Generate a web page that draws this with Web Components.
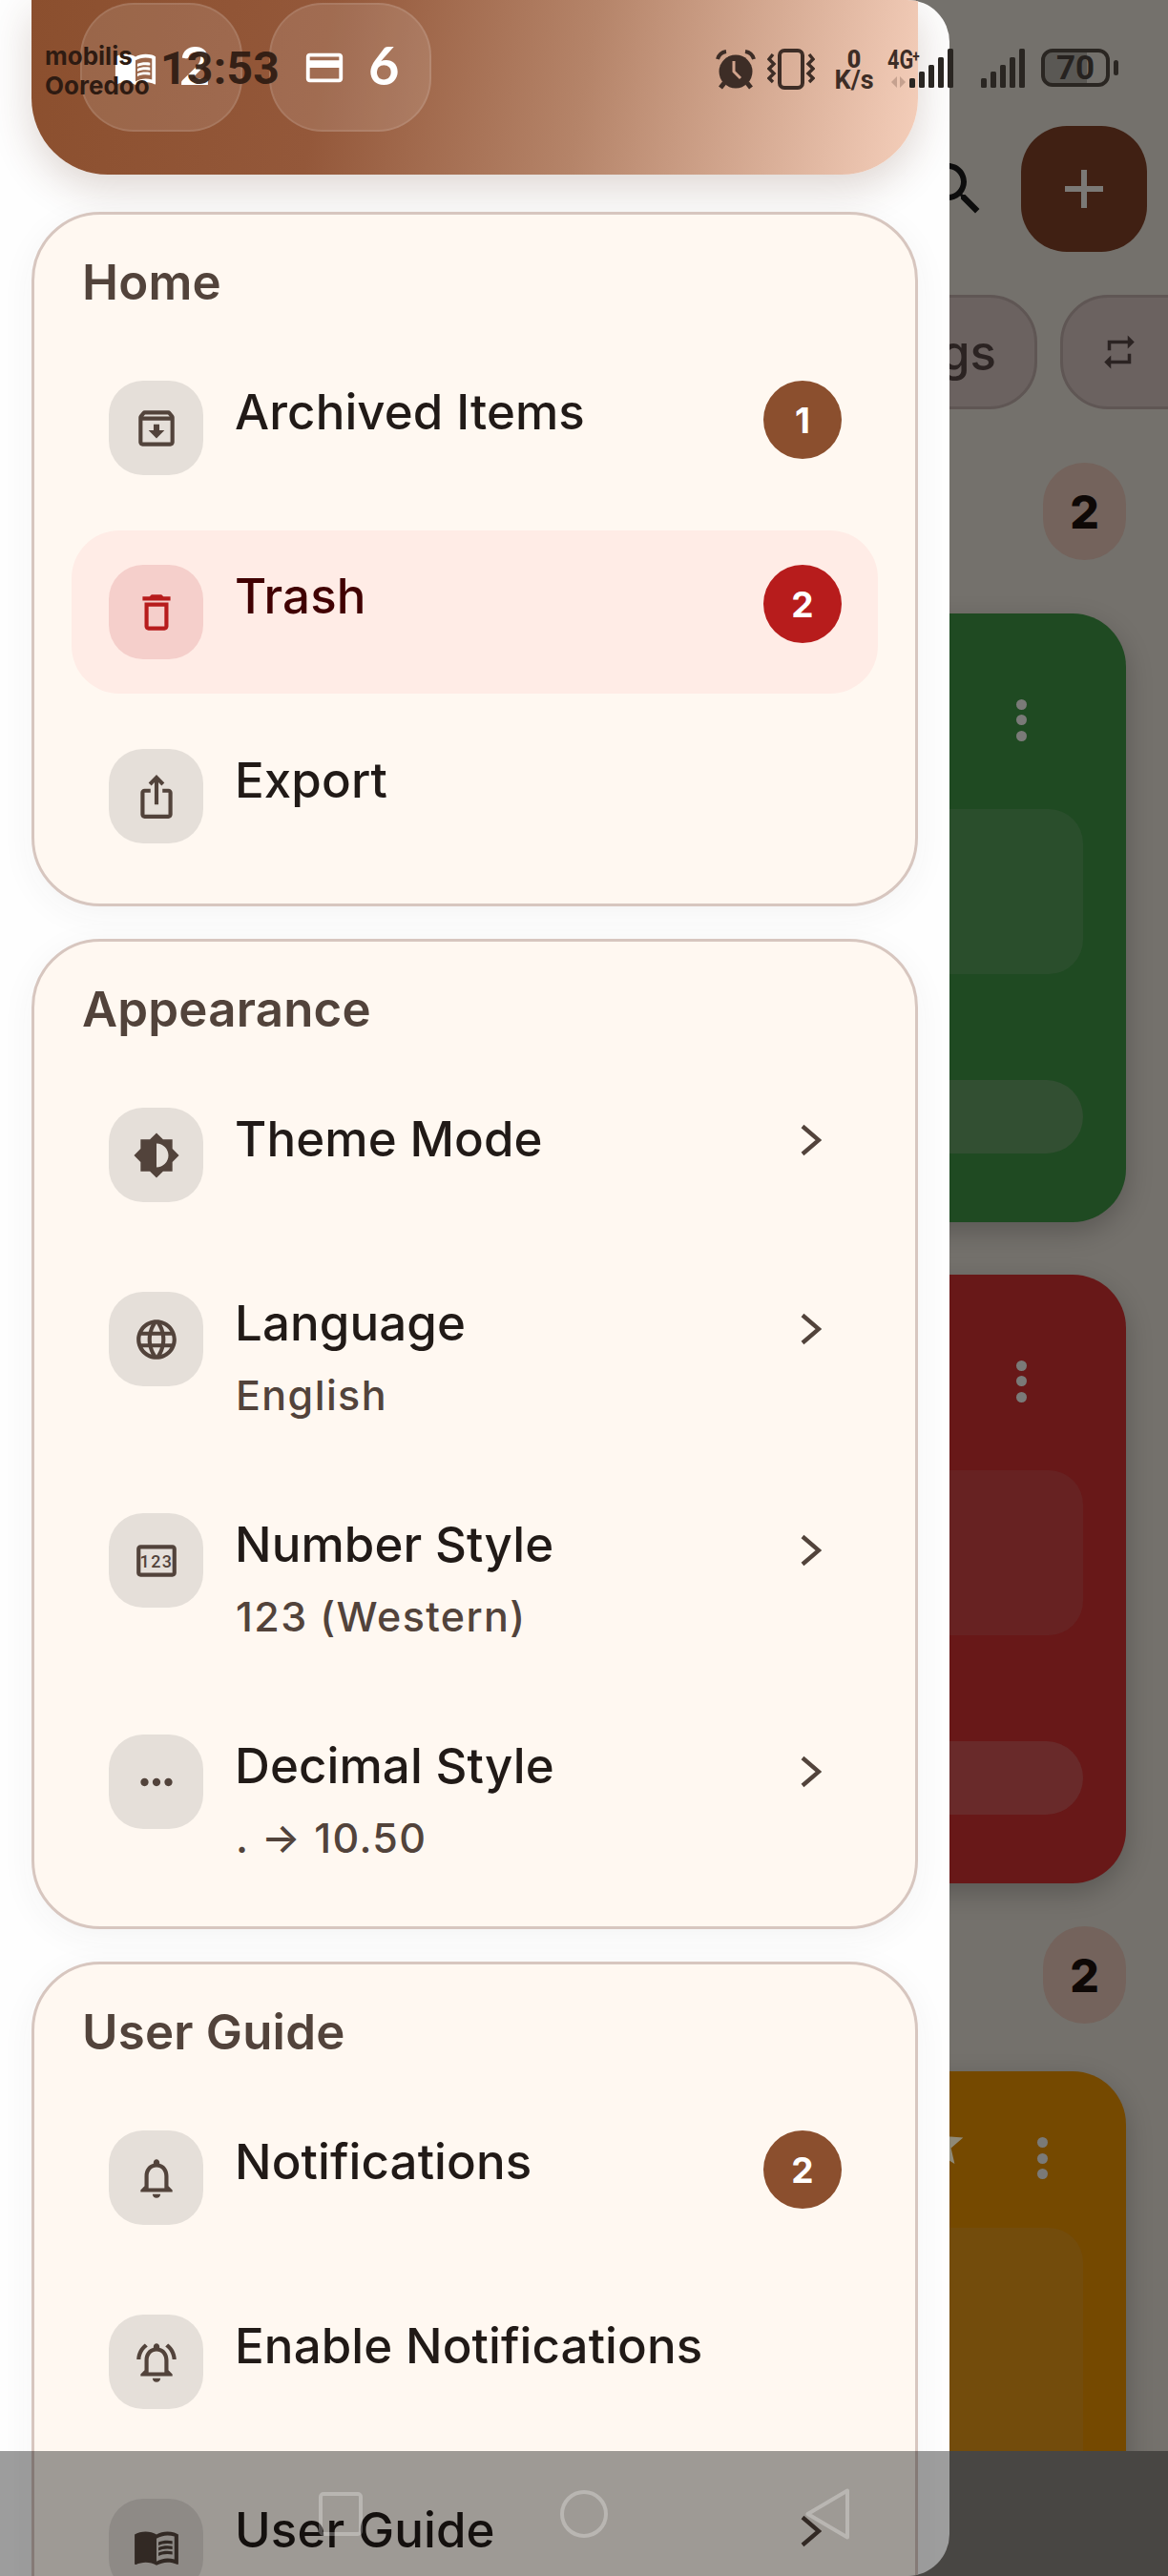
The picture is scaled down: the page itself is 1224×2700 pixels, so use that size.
<!DOCTYPE html>
<html lang="en"><head><meta charset="utf-8"><title>Drawer</title>
<style>
html,body{margin:0;padding:0;background:#74716c}
body{font-family:"Inter","Noto Sans",sans-serif;width:1224px;height:2700px;overflow:hidden}
</style></head><body>
<phone-screen>
  <bg-screen slot="bg"></bg-screen>
  <nav-drawer slot="drawer">
    <drawer-header>
      <stat-chip><app-icon slot="icon" name="book" size="46"></app-icon>2</stat-chip>
      <stat-chip><app-icon slot="icon" name="card" size="46"></app-icon>6</stat-chip>
    </drawer-header>
    <menu-card heading="Home">
      <menu-item><app-icon slot="icon" name="archive"></app-icon>Archived Items<count-badge slot="end">1</count-badge></menu-item>
      <menu-item tone="danger"><app-icon slot="icon" name="trash"></app-icon>Trash<count-badge slot="end" tone="danger">2</count-badge></menu-item>
      <menu-item><app-icon slot="icon" name="share"></app-icon>Export</menu-item>
    </menu-card>
    <menu-card heading="Appearance">
      <menu-item><app-icon slot="icon" name="theme"></app-icon>Theme Mode<chev-mark slot="end"></chev-mark></menu-item>
      <menu-item><app-icon slot="icon" name="globe"></app-icon>Language<span slot="sub">English</span><chev-mark slot="end" low></chev-mark></menu-item>
      <menu-item><app-icon slot="icon" name="pin"></app-icon>Number Style<span slot="sub">123 (Western)</span><chev-mark slot="end" low></chev-mark></menu-item>
      <menu-item><app-icon slot="icon" name="more"></app-icon>Decimal Style<span slot="sub">. → 10.50</span><chev-mark slot="end" low></chev-mark></menu-item>
    </menu-card>
    <menu-card heading="User Guide">
      <menu-item><app-icon slot="icon" name="bell"></app-icon>Notifications<count-badge slot="end">2</count-badge></menu-item>
      <menu-item><app-icon slot="icon" name="bellon"></app-icon>Enable Notifications</menu-item>
      <menu-item><app-icon slot="icon" name="book"></app-icon>User Guide<chev-mark slot="end"></chev-mark></menu-item>
    </menu-card>
  </nav-drawer>
  <status-bar slot="over"></status-bar>
  <sys-nav slot="over"></sys-nav>
</phone-screen>
<script>
const ICONS={
archive:'<path d="M20.54 5.23l-1.39-1.68C18.88 3.21 18.47 3 18 3H6c-.47 0-.88.21-1.16.55L3.46 5.23C3.17 5.57 3 6.02 3 6.5V19c0 1.1.9 2 2 2h14c1.1 0 2-.9 2-2V6.5c0-.48-.17-.93-.46-1.27zM6.24 5h11.52l.83 1H5.42l.82-1zM5 19V8h14v11H5zm8.45-9h-2.9v3H8l4 4 4-4h-2.55z"/>',
trash:'<path d="M6 19c0 1.1.9 2 2 2h8c1.1 0 2-.9 2-2V7H6v12zM8 9h8v10H8V9zm7.5-5l-1-1h-5l-1 1H5v2h14V4z"/>',
share:'<path d="M16 5l-1.42 1.42-1.59-1.59V16h-1.98V4.83L9.42 6.42 8 5l4-4 4 4zm4 5v11c0 1.1-.9 2-2 2H6c-1.11 0-2-.9-2-2V10c0-1.11.89-2 2-2h3v2H6v11h12V10h-3V8h3c1.1 0 2 .89 2 2z"/>',
theme:'<path fill-rule="evenodd" d="M20 15.31L23.31 12 20 8.69V4h-4.69L12 .69 8.69 4H4v4.69L.69 12 4 15.31V20h4.69L12 23.31 15.31 20H20v-4.69zM12 18V6c3.31 0 6 2.69 6 6s-2.69 6-6 6z"/>',
globe:'<path d="M11.99 2C6.47 2 2 6.48 2 12s4.47 10 9.99 10C17.52 22 22 17.52 22 12S17.52 2 11.99 2zm6.93 6h-2.95c-.32-1.25-.78-2.45-1.38-3.56 1.84.63 3.37 1.91 4.33 3.56zM12 4.04c.83 1.2 1.48 2.53 1.91 3.96h-3.82c.43-1.43 1.08-2.76 1.91-3.96zM4.26 14C4.1 13.36 4 12.69 4 12s.1-1.36.26-2h3.38c-.08.66-.14 1.32-.14 2 0 .68.06 1.34.14 2H4.26zm.82 2h2.95c.32 1.25.78 2.45 1.38 3.56-1.84-.63-3.37-1.9-4.33-3.56zm2.95-8H5.08c.96-1.66 2.49-2.93 4.33-3.56C8.81 5.55 8.35 6.75 8.03 8zM12 19.96c-.83-1.2-1.48-2.53-1.91-3.96h3.82c-.43 1.43-1.08 2.76-1.91 3.96zM14.34 14H9.66c-.09-.66-.16-1.32-.16-2 0-.68.07-1.35.16-2h4.68c.09.65.16 1.32.16 2 0 .68-.07 1.34-.16 2zm.25 5.56c.6-1.11 1.06-2.31 1.38-3.56h2.95c-.96 1.65-2.49 2.93-4.33 3.56zM16.36 14c.08-.66.14-1.32.14-2 0-.68-.06-1.34-.14-2h3.38c.16.64.26 1.31.26 2s-.1 1.36-.26 2h-3.38z"/>',
pin:'<path d="M20 4H4c-1.11 0-2 .89-2 2v12c0 1.11.89 2 2 2h16c1.11 0 2-.89 2-2V6c0-1.11-.89-2-2-2zm0 14H4V6h16v12z"/><text x="12" y="15.3" text-anchor="middle" font-family="Roboto,sans-serif" font-weight="500" font-size="8.6" letter-spacing=".7">123</text>',
more:'<path d="M6 10c-1.1 0-2 .9-2 2s.9 2 2 2 2-.9 2-2-.9-2-2-2zm12 0c-1.1 0-2 .9-2 2s.9 2 2 2 2-.9 2-2-.9-2-2-2zm-6 0c-1.1 0-2 .9-2 2s.9 2 2 2 2-.9 2-2-.9-2-2-2z"/>',
bell:'<path d="M12 22c1.1 0 2-.9 2-2h-4c0 1.1.9 2 2 2zm6-6v-5c0-3.07-1.63-5.64-4.5-6.32V4c0-.83-.67-1.5-1.5-1.5s-1.5.67-1.5 1.5v.68C7.64 5.36 6 7.92 6 11v5l-2 2v1h16v-1l-2-2zm-2 1H8v-6c0-2.48 1.51-4.5 4-4.5s4 2.02 4 4.5v6z"/>',
bellon:'<path d="M12 22c1.1 0 2-.9 2-2h-4c0 1.1.9 2 2 2zm6-6v-5c0-3.07-1.63-5.64-4.5-6.32V4c0-.83-.67-1.5-1.5-1.5s-1.5.67-1.5 1.5v.68C7.64 5.36 6 7.92 6 11v5l-2 2v1h16v-1l-2-2zm-2 1H8v-6c0-2.48 1.51-4.5 4-4.5s4 2.02 4 4.5v6z"/><path d="M7.58 4.08L6.15 2.65C3.75 4.48 2.17 7.3 2.03 10.5h2c.15-2.65 1.51-4.97 3.55-6.42zm12.39 6.42h2c-.15-3.2-1.73-6.02-4.12-7.85l-1.42 1.43c2.02 1.45 3.39 3.77 3.54 6.42z"/>',
book:'<path d="M21 5c-1.11-.35-2.33-.5-3.5-.5-1.95 0-4.05.4-5.5 1.5-1.45-1.1-3.55-1.5-5.5-1.5S2.45 4.9 1 6v14.65c0 .25.25.5.5.5.1 0 .15-.05.25-.05C3.1 20.45 5.05 20 6.5 20c1.95 0 4.05.4 5.5 1.5 1.35-.85 3.8-1.5 5.5-1.5 1.65 0 3.35.3 4.75 1.05.1.05.15.05.25.05.25 0 .5-.25.5-.5V6c-.6-.45-1.25-.75-2-1zm0 13.5c-1.1-.35-2.3-.5-3.5-.5-1.7 0-4.15.65-5.5 1.5V8c1.35-.85 3.8-1.5 5.5-1.5 1.2 0 2.4.15 3.5.5v11.5z"/><path d="M17.5 10.5c.88 0 1.73.09 2.5.26V9.24c-.79-.15-1.64-.24-2.5-.24-1.7 0-3.24.29-4.5.83v1.66c1.13-.64 2.7-.99 4.5-.99zM13 12.49v1.66c1.13-.64 2.7-.99 4.5-.99.88 0 1.73.09 2.5.26V11.9c-.79-.15-1.64-.24-2.5-.24-1.7 0-3.24.3-4.5.83zm4.5 1.84c-1.7 0-3.24.29-4.5.83v1.66c1.13-.64 2.7-.99 4.5-.99.88 0 1.73.09 2.5.26v-1.52c-.79-.16-1.64-.24-2.5-.24z"/>',
card:'<path d="M20 4H4c-1.11 0-1.99.89-1.99 2L2 18c0 1.11.89 2 2 2h16c1.11 0 2-.89 2-2V6c0-1.11-.89-2-2-2zm0 14H4v-6h16v6zm0-10H4V6h16v2z"/>',
repeat:'<path d="M7 7h10v3l4-4-4-4v3H5v6h2V7zm10 10H7v-3l-4 4 4 4v-3h12v-6h-2v4z"/>',
search:'<path d="M15.5 14h-.79l-.28-.27C15.41 12.59 16 11.11 16 9.5 16 5.91 13.09 3 9.5 3S3 5.91 3 9.5 5.91 16 9.5 16c1.61 0 3.09-.59 4.23-1.57l.27.28v.79l5 4.99L20.49 19l-4.99-5zm-6 0C7.01 14 5 11.99 5 9.5S7.01 5 9.5 5 14 7.01 14 9.5 11.99 14 9.5 14z"/>',
star:'<path d="M12 17.27L18.18 21l-1.64-7.03L22 9.24l-7.19-.61L12 2 9.19 8.63 2 9.24l5.46 4.73L5.82 21z"/>'
};
function def(name,css,html){
  class C extends HTMLElement{
    constructor(){super();this.attachShadow({mode:'open'});}
    connectedCallback(){
      if(this.shadowRoot.firstChild)return;
      this.shadowRoot.innerHTML='<style>'+css+'</style>'+(typeof html==='function'?html(this):html);
    }
  }
  customElements.define(name,C);
}
class AppIcon extends HTMLElement{
  connectedCallback(){
    if(this.shadowRoot)return;
    const s=this.getAttribute('size')||50;
    this.attachShadow({mode:'open'}).innerHTML=`<style>:host{display:block;width:${s}px;height:${s}px;color:inherit}svg{display:block;width:100%;height:100%;fill:currentColor}</style><svg viewBox="0 0 24 24">${ICONS[this.getAttribute('name')]}</svg>`;
  }
}
customElements.define('app-icon',AppIcon);

def('phone-screen',`
:host{display:block;position:relative;width:1224px;height:2700px;overflow:hidden;background:#74716c}
.stack{display:grid;width:1224px;height:2700px;grid-template:2700px/1224px}
::slotted([slot=bg]),::slotted([slot=drawer]){grid-area:1/1}
`,`<div class="stack"><slot name="bg"></slot><slot name="drawer"></slot></div><slot name="over"></slot>`);

def('bg-card',`
:host{display:block;box-sizing:border-box;width:280px;margin:var(--mt,0) 44px 0 0;height:var(--h,638px);background:var(--c);border-radius:56px;box-shadow:0 10px 28px rgba(0,0,0,.22);overflow:hidden;flex:none}
.head{box-sizing:border-box;height:var(--head,205px);padding:18px var(--dr,104px) 0 0;display:flex;justify-content:flex-end;align-items:center;gap:73px;color:#8f8a78}
.head ::slotted(*){margin-top:-30px}
.dots{display:flex;flex-direction:column;gap:5.5px}
.dots i{display:block;width:11px;height:11px;border-radius:50%;background:#7a7a78}
.panel{height:var(--ph,173px);margin-right:45px;background:var(--p);border-radius:0 36px 36px 0}
.pill{height:77px;margin:111px 45px 0 0;background:var(--q);border-radius:0 40px 40px 0}
`,h=>`<div class="head"><slot></slot><div class="dots"><i></i><i></i><i></i></div></div><div class="panel"></div>${h.hasAttribute('nopill')?'':'<div class="pill"></div>'}`);

def('bg-count',`
:host{display:flex;align-items:center;justify-content:center;width:87px;height:102px;margin:var(--mt,0) 44px 0 0;border-radius:44px;background:#74635c;color:#0e0806;font:800 48px "Inter",sans-serif;flex:none}
`,`<slot></slot>`);

def('bg-screen',`
:host{display:flex;flex-direction:column;align-items:flex-end;height:2569px;overflow:hidden;padding-top:132px;box-sizing:border-box}
.top{display:flex;align-items:center;gap:33px;margin-right:22px;flex:none}
.top app-icon{color:#0d0d0d}
.add{width:132px;height:132px;border-radius:48px;background:#402013;display:flex;align-items:center;justify-content:center}
.add svg{width:40px;height:40px;display:block}
.chips{display:flex;gap:24px;margin:45px -76px 0 0;flex:none;height:120px}
.chip{box-sizing:border-box;height:120px;border:3px solid #5f5654;background:#6b6260;border-radius:50px;display:flex;align-items:center;color:#2b2322;font:500 51px "Inter",sans-serif}
.c1{width:187px;justify-content:flex-end;padding-right:40px}
.c2{width:189px;padding-left:38px}
`,`<div class="top"><app-icon name="search" size="72"></app-icon><div class="add"><svg viewBox="0 0 40 40"><path d="M17 0h6v17h17v6H23v17h-6V23H0v-6h17z" fill="#7b7976"/></svg></div></div>
<div class="chips"><div class="chip c1">gs</div><div class="chip c2"><app-icon name="repeat" size="42"></app-icon></div></div>
<bg-count style="--mt:56px">2</bg-count>
<bg-card style="--mt:56px;--c:#1f4a22;--p:#2a4e2c;--q:#324f32"></bg-card>
<bg-card style="--mt:55px;--c:#681818;--p:#672222;--q:#692a2a"></bg-card>
<bg-count style="--mt:45px">2</bg-count>
<bg-card nopill style="--mt:50px;--h:700px;--c:#754900;--p:#734c0c;--head:164px;--ph:420px;--dr:82px"><app-icon name="star" size="56"></app-icon></bg-card>`);

def('nav-drawer',`
:host{display:block;box-sizing:border-box;width:995px;height:2700px;background:#fefefe;border-radius:0 44px 44px 0;overflow:hidden}
.col{display:flex;flex-direction:column;gap:34px;padding:0 33px}
`,`<div class="col"><slot></slot></div>`);

def('drawer-header',`
:host{display:flex;align-items:flex-start;gap:28px;box-sizing:border-box;width:929px;height:183px;padding:3px 0 0 51px;margin-bottom:5px;border-radius:0 0 80px 80px;background:linear-gradient(100deg,#8b4f2e 0%,#94583a 33%,#b58469 62%,#f5cfbb 100%);box-shadow:0 14px 44px rgba(90,50,30,.2);flex:none}
`,`<slot></slot>`);

def('stat-chip',`
:host{display:flex;align-items:center;box-sizing:border-box;width:170px;height:135px;padding-left:33px;gap:23px;border-radius:56px;background:rgba(255,255,255,.12);border:2px solid rgba(255,255,255,.1);color:#fff;font:700 56px/1 "Lato",sans-serif}
.n{margin-top:-6px}
`,`<slot name="icon"></slot><span class="n"><slot></slot></span>`);

def('menu-card',`
:host{display:flex;flex-direction:column;box-sizing:border-box;width:929px;background:#fff8f1;border:3px solid #d7c6bf;border-radius:72px;padding:39px 39px 27px;box-shadow:0 8px 36px rgba(60,50,50,.05);flex:none}
h2{margin:2px 0 37px 11px;font:600 51px/60px "Inter",sans-serif;color:#52433b;letter-spacing:.2px}
.rows{display:flex;flex-direction:column;gap:22px}
`,h=>`<h2>${h.getAttribute('heading')}</h2><div class="rows"><slot></slot></div>`);

def('menu-item',`
:host{display:flex;align-items:flex-start;box-sizing:border-box;min-height:171px;padding:36px 38px 36px 39px;border-radius:50px;color:#211a17}
:host([tone=danger]){background:#ffece6;color:#410002}
.ic{width:99px;height:99px;border-radius:36px;background:#e5dfd9;color:#52433b;display:flex;align-items:center;justify-content:center;flex:none}
:host([tone=danger]) .ic{background:#f5cfcb;color:#b71c1c}
.tx{flex:1;margin:3px 0 0 33px;min-width:0}
.t{font:500 51px/60px "Inter",sans-serif;letter-spacing:.1px;white-space:nowrap}
.s{font:500 43px/52px "Inter",sans-serif;color:#52433b;letter-spacing:1.4px;white-space:nowrap}
::slotted([slot=sub]){display:block;margin:19px 0 4px 1px}
`,`<div class="ic"><slot name="icon"></slot></div><div class="tx"><div class="t"><slot></slot></div><div class="s"><slot name="sub"></slot></div></div><slot name="end"></slot>`);

def('count-badge',`
:host{display:flex;align-items:center;justify-content:center;width:82px;height:82px;border-radius:50%;background:#8b4f2e;color:#fff;font:700 37px "Inter",sans-serif;flex:none}
:host([tone=danger]){background:#b71c1c}
`,`<slot></slot>`);

def('chev-mark',`
:host{display:block;width:22px;height:34px;margin:17px 21px 0 0;flex:none}
:host([low]){margin-top:22px}
svg{display:block;width:22px;height:34px}
`,`<svg viewBox="0 0 22 34"><path d="M2 2.5L19 17 2 31.5" fill="none" stroke="#52433b" stroke-width="4.4"/></svg>`);

def('status-bar',`
:host{position:absolute;left:0;top:0;width:1224px;height:110px;display:flex;align-items:flex-start;box-sizing:border-box;padding:51px 52px 0 47px;color:#2e1b12;z-index:3}
.op{width:121px;flex:none;font:700 26px/31px "Inter",sans-serif;color:#2e1b12;margin-top:-8px;white-space:nowrap}
.time{font:700 48px/50px "Roboto",sans-serif;color:#2e1b12;opacity:.93;margin-top:-4px;letter-spacing:.3px;white-space:nowrap}
.right{margin-left:auto;display:flex;align-items:flex-start;color:#3d2d26}
svg{display:block;flex:none}
.speed{width:42px;margin-left:20px;text-align:center;font:700 27px/21px "Roboto",sans-serif;white-space:nowrap;color:#3d2d26}
.speed b{display:block;font-size:25px;line-height:23px}
.net{width:23px;margin-left:14px;white-space:nowrap;font:700 27px/24px "Roboto",sans-serif;color:#3d2d26}
.net span{display:inline-block;transform:scaleX(.8);transform-origin:0 0}
.net sup{font-size:17px;line-height:0;vertical-align:7px;margin-left:-1px}
.net svg{margin:5px 0 0 3px}
.batt{position:relative;width:72px;height:40px;box-sizing:border-box;border:4px solid #2a2622;border-radius:12px;overflow:hidden;display:flex;align-items:center;justify-content:center;font:700 35px/1 "Roboto",sans-serif;color:#26221f}
.batt::before{content:"";position:absolute;left:0;top:0;bottom:0;width:44px;background:rgba(0,0,0,.22)}
.batt span{position:relative}
.nub{width:5px;height:16px;border-radius:3px;background:#2a2622;margin:12px 0 0 4px}
`,()=>{
 const bars=(c)=>`<svg width="46" height="41" viewBox="0 0 46 41" fill="${c}"><rect x="0" y="31" width="6" height="10" rx="1.5"/><rect x="10" y="24" width="6" height="17" rx="1.5"/><rect x="20" y="17" width="6" height="24" rx="1.5"/><rect x="30" y="9" width="6" height="32" rx="1.5"/><rect x="40" y="0" width="6" height="41" rx="1.5"/></svg>`;
 return `<div class="op">mobilis<br>Ooredoo</div><div class="time">13:53</div><div class="right">
 <svg width="44" height="44" viewBox="0 0 44 44"><circle cx="22" cy="24" r="17.5" fill="#3d2d26"/><path d="M20 13v11l7 7" fill="none" stroke="#d2a48d" stroke-width="3"/><path d="M3 11Q5 4 12 3M41 11Q39 4 32 3" fill="none" stroke="#3d2d26" stroke-width="4"/><path d="M10 36l-4 5M34 36l4 5" stroke="#3d2d26" stroke-width="5"/></svg>
 <svg style="margin-left:11px" width="50" height="43" viewBox="0 0 50 43" fill="none" stroke="#3d2d26"><rect x="13" y="2" width="24" height="39" rx="5" stroke-width="4"/><path d="M6 6L2 11l5 5-5 5 5 5-5 5 4 4M44 6l4 5-5 5 5 5-5 5 5 5-4 4" stroke-width="3.4"/></svg>
 <div class="speed"><b>0</b>K/s</div>
 <div class="net"><span>4G<sup>+</sup></span><svg width="17" height="12" viewBox="0 0 17 12" fill="#c19d8c" style="opacity:.9"><path d="M7 0v12L1 6zM10 0v12l6-6z"/></svg></div>
 ${bars('#2a2622')}
 ${bars('#2a2622').replace('<svg ','<svg style="margin-left:29px" ')}
 <div class="batt" style="margin-left:17px"><span>70</span></div><div class="nub"></div>
 </div>`;
});

def('sys-nav',`
:host{position:absolute;left:0;bottom:0;width:1224px;height:131px;display:flex;align-items:center;gap:207px;box-sizing:border-box;padding-left:334px;background:rgba(0,0,0,.38);z-index:4}
svg{display:block;flex:none;fill:none;stroke:rgba(255,255,255,.28);stroke-width:4}
`,`<svg width="46" height="46" viewBox="0 0 46 46"><rect x="2" y="2" width="42" height="42" rx="3"/></svg>
<svg width="50" height="50" viewBox="0 0 50 50"><circle cx="25" cy="25" r="23"/></svg>
<svg width="46" height="54" viewBox="0 0 46 54"><path d="M44 2.5v49L2.5 27z" stroke-linejoin="round"/></svg>`);
</script>
</body></html>
